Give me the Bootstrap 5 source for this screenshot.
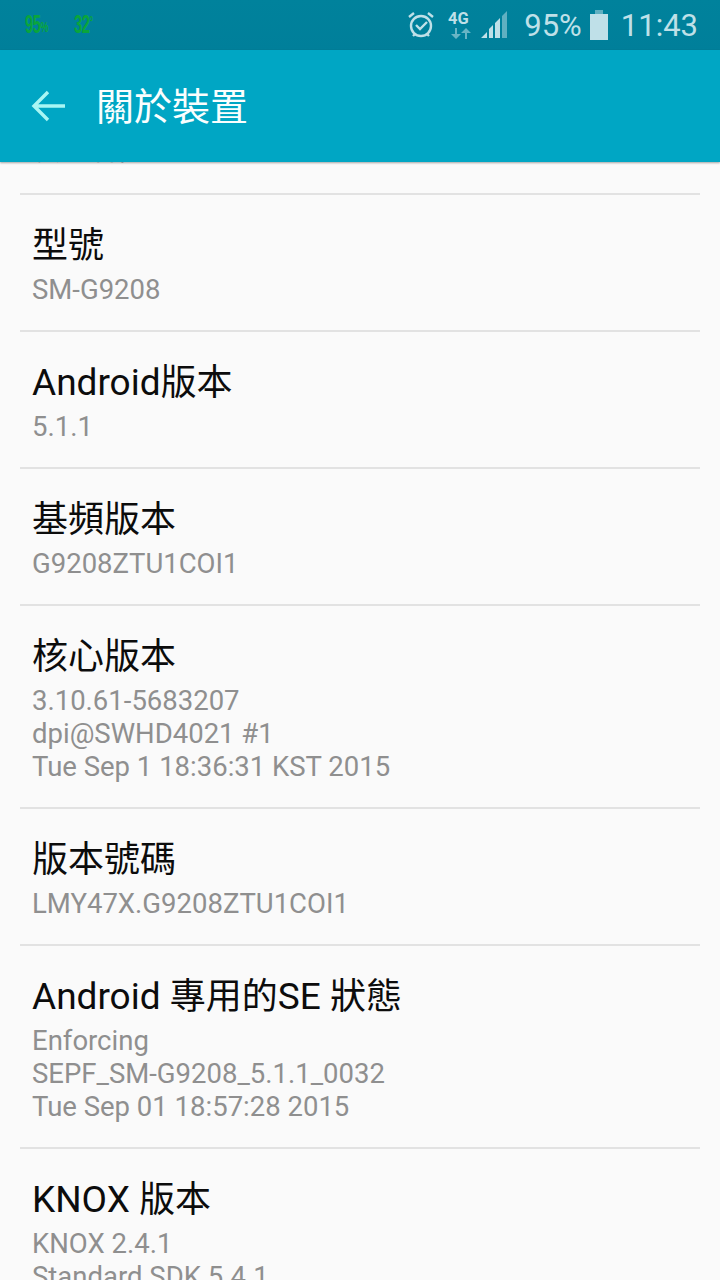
<!DOCTYPE html>
<html lang="zh-Hant">
<head>
  <meta charset="UTF-8" />
  <meta name="viewport" content="width=device-width, initial-scale=1.0" />
  <title>關於裝置</title>
  <link href="https://cdn.jsdelivr.net/npm/bootstrap@5.3.0/dist/css/bootstrap.min.css" rel="stylesheet" />
  <style>
    html, body { height: 1280px; overflow: hidden; }
    body {
      background: #fafafa;
      font-family: Roboto, "Noto Sans CJK TC", sans-serif;
    }
    .status-strip {
      height: 50px;
      background: linear-gradient(#00829c, #007f9a);
      color: #bfe0e8;
      padding: 0 22px 0 25px;
    }
    .temp-readout {
      color: #0aa53c;
      font-family: "Liberation Sans", sans-serif;
      font-size: 25px;
      font-weight: 700;
      letter-spacing: -1px;
      width: 49px;
      transform: scaleX(.6);
      transform-origin: left center;
      white-space: nowrap;
    }
    .temp-readout span { font-size: 15px; vertical-align: 1px; }
    .temp-readout span.degree-mark { vertical-align: 6px; }
    .status-text { font-size: 31px; line-height: 1; }
    .gap-13 { margin-left: 13px; }
    .title-strip {
      height: 112px;
      background: #00a6c4;
      box-shadow: 0 1px 2px rgba(0,0,0,.35);
      padding-left: 31px;
      position: relative;
      z-index: 2;
    }
    .title-strip h1 {
      margin: 2px 0 0 31px;
      font-size: 38px;
      font-weight: 400;
      color: #fafefe;
      line-height: 1;
    }
    .info-list {
      padding: 0 20px;
    }
    .info-row {
      padding: 26px 12px 0;
      border-bottom: 2px solid #e2e2e2;
    }
    .info-row.cut-row {
      height: 33px;
      padding: 0 12px;
      overflow: hidden;
    }
    .cut-text { font-size: 28px; line-height: 33px; color: #8f8f8f; margin-top: -28px; }
    .info-name { font-size: 37px; line-height: 50px; color: #0c0c0c; }
    .info-name .cjk-part { font-size: 36px; }
    .info-value { font-size: 27.5px; line-height: 33px; color: #8f8f8f; padding: 2px 0 24px; }
  </style>
</head>
<body>
  <div class="status-strip d-flex align-items-center">
    <div class="temp-readout">95<span>%</span></div>
    <div class="temp-readout">32<span class="degree-mark">°</span></div>
    <div class="ms-auto d-flex align-items-center">
      <svg width="28" height="30" viewBox="1 0 28 30" fill="none" stroke="#bfe0e8" stroke-width="2.4"><circle cx="15" cy="16" r="10"/><path d="M10 15l4 4 7-7M3 7l5-4M27 7l-5-4M7 26l2-2M23 26l-2-2"/></svg>
      <svg class="gap-13" width="24" height="30" viewBox="0 0 24 30" fill="#bfe0e8"><text x="0" y="14" font-family="Roboto" font-weight="700" font-size="16.5">4G</text><path d="M7 18v6H3l5 5 5-5H9v-6zM17 29v-6h-4l5-5 5 5h-4v6z" opacity=".55"/></svg>
      <svg class="ms-2" width="28" height="28" viewBox="0 0 28 28" fill="#bfe0e8"><path d="M1 27l6-6v6zM9 27v-9l4-4v13zM15 27V12l5-5v20z"/><path d="M22 27V5l5-5v27z" opacity=".5"/></svg>
      <span class="status-text ms-3">95%</span>
      <svg class="ms-2" width="18" height="30" viewBox="0 0 18 30" fill="#bfe0e8"><rect y="4" width="18" height="26"/><rect x="5" width="8" height="4" opacity=".5"/></svg>
      <span class="status-text gap-13">11:43</span>
    </div>
  </div>
  <div class="title-strip d-flex align-items-center">
    <svg width="34" height="32" viewBox="0 0 34 32" fill="none" stroke="#a8f6f4" stroke-width="3.4"><path d="M34 16H3M17 2L3 16l14 14"/></svg>
    <h1>關於裝置</h1>
  </div>
  <div class="info-list">
    <div class="info-row cut-row"><div class="cut-text">裝置名稱</div></div>
    <div class="info-row"><div class="info-name"><span class="cjk-part">型號</span></div><div class="info-value">SM-G9208</div></div>
    <div class="info-row"><div class="info-name">Android<span class="cjk-part">版本</span></div><div class="info-value">5.1.1</div></div>
    <div class="info-row"><div class="info-name"><span class="cjk-part">基頻版本</span></div><div class="info-value">G9208ZTU1COI1</div></div>
    <div class="info-row"><div class="info-name"><span class="cjk-part">核心版本</span></div><div class="info-value">3.10.61-5683207<br>dpi@SWHD4021 #1<br>Tue Sep 1 18:36:31 KST 2015</div></div>
    <div class="info-row"><div class="info-name"><span class="cjk-part">版本號碼</span></div><div class="info-value">LMY47X.G9208ZTU1COI1</div></div>
    <div class="info-row"><div class="info-name">Android <span class="cjk-part">專用的</span>SE <span class="cjk-part">狀態</span></div><div class="info-value">Enforcing<br>SEPF_SM-G9208_5.1.1_0032<br>Tue Sep 01 18:57:28 2015</div></div>
    <div class="info-row"><div class="info-name">KNOX <span class="cjk-part">版本</span></div><div class="info-value">KNOX 2.4.1<br>Standard SDK 5.4.1</div></div>
  </div>
  <script src="https://cdn.jsdelivr.net/npm/bootstrap@5.3.0/dist/js/bootstrap.bundle.min.js"></script>
</body>
</html>
